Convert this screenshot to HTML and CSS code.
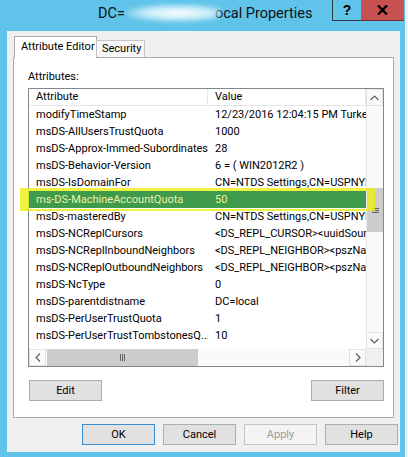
FILE: index.html
```html
<!DOCTYPE html>
<html>
<head>
<meta charset="utf-8">
<link rel="stylesheet" href="styles.css">
</head>
<body>
<div class="window">
  <div class="titlebar">
    <div class="title">DC=<span class="blur"></span>ocal Properties</div>
    <div class="caption-buttons">
      <div class="cap-btn cap-help">?</div>
      <div class="cap-btn cap-close">
        <svg width="11" height="10" viewBox="0 0 11 10"><path d="M1 0.5 L10 9.5 M10 0.5 L1 9.5" stroke="#000" stroke-width="2.4" fill="none"/></svg>
      </div>
    </div>
  </div>
  <div class="client">
    <div class="tabs">
      <div class="tab tab-active">Attribute Editor</div>
      <div class="tab tab-inactive">Security</div>
    </div>
    <div class="panel">
      <div class="label">Attributes:</div>
      <div class="list">
        <div class="rows">
          <div class="row header"><div class="cell">Attribute</div><div class="cell">Value</div></div>
          <div class="row"><div class="cell">modifyTimeStamp</div><div class="cell">12/23/2016 12:04:15 PM Turkey Standard Time</div></div>
          <div class="row"><div class="cell">msDS-AllUsersTrustQuota</div><div class="cell">1000</div></div>
          <div class="row"><div class="cell">msDS-Approx-Immed-Subordinates</div><div class="cell">28</div></div>
          <div class="row"><div class="cell">msDS-Behavior-Version</div><div class="cell">6 = ( WIN2012R2 )</div></div>
          <div class="row"><div class="cell">msDS-IsDomainFor</div><div class="cell">CN=NTDS Settings,CN=USPNYDC</div></div>
          <div class="row selected"><div class="cell">ms-DS-MachineAccountQuota</div><div class="cell">50</div></div>
          <div class="row"><div class="cell">msDs-masteredBy</div><div class="cell">CN=NTDS Settings,CN=USPNYDC</div></div>
          <div class="row"><div class="cell">msDS-NCReplCursors</div><div class="cell">&lt;DS_REPL_CURSOR&gt;&lt;uuidSourceDsa</div></div>
          <div class="row"><div class="cell">msDS-NCReplInboundNeighbors</div><div class="cell">&lt;DS_REPL_NEIGHBOR&gt;&lt;pszNamingContext</div></div>
          <div class="row"><div class="cell">msDS-NCReplOutboundNeighbors</div><div class="cell">&lt;DS_REPL_NEIGHBOR&gt;&lt;pszNamingContext</div></div>
          <div class="row"><div class="cell">msDS-NcType</div><div class="cell">0</div></div>
          <div class="row"><div class="cell">msDS-parentdistname</div><div class="cell">DC=local</div></div>
          <div class="row"><div class="cell">msDS-PerUserTrustQuota</div><div class="cell">1</div></div>
          <div class="row"><div class="cell">msDS-PerUserTrustTombstonesQ...</div><div class="cell">10</div></div>
        </div>
        <div class="vscroll">
          <div class="sb-btn">
            <svg width="9" height="6" viewBox="0 0 9 6"><path d="M0.5 5 L4.5 1 L8.5 5" stroke="#606060" stroke-width="1.2" fill="none"/></svg>
          </div>
          <div class="vtrack">
            <div class="vthumb">
              <svg width="7" height="7" viewBox="0 0 7 7"><path d="M0 1.5 H7 M0 3.5 H7 M0 5.5 H7" stroke="#606060" stroke-width="1" fill="none"/></svg>
            </div>
          </div>
          <div class="sb-btn">
            <svg width="9" height="6" viewBox="0 0 9 6"><path d="M0.5 1 L4.5 5 L8.5 1" stroke="#606060" stroke-width="1.2" fill="none"/></svg>
          </div>
        </div>
        <div class="hscroll">
          <div class="sb-btn">
            <svg width="6" height="9" viewBox="0 0 6 9"><path d="M5 0.5 L1 4.5 L5 8.5" stroke="#606060" stroke-width="1.2" fill="none"/></svg>
          </div>
          <div class="htrack">
            <div class="hthumb">
              <svg width="7" height="7" viewBox="0 0 7 7"><path d="M1.5 0 V7 M3.5 0 V7 M5.5 0 V7" stroke="#606060" stroke-width="1" fill="none"/></svg>
            </div>
          </div>
          <div class="sb-btn">
            <svg width="6" height="9" viewBox="0 0 6 9"><path d="M1 0.5 L5 4.5 L1 8.5" stroke="#606060" stroke-width="1.2" fill="none"/></svg>
          </div>
        </div>
        <div class="corner"></div>
        <div class="marker"></div>
      </div>
      <div class="list-buttons">
        <button class="btn">Edit</button>
        <button class="btn">Filter</button>
      </div>
    </div>
    <div class="dialog-buttons">
      <button class="btn btn-default">OK</button>
      <button class="btn">Cancel</button>
      <button class="btn btn-disabled">Apply</button>
      <button class="btn">Help</button>
    </div>
  </div>
</div>
</body>
</html>
```
FILE: styles.css
```css
* { box-sizing: border-box; }
html, body { margin: 0; padding: 0; }
body {
  width: 408px;
  height: 457px;
  overflow: hidden;
  background: #eef2f4;
  font-family: Roboto, "Liberation Sans", sans-serif;
  font-size: 11px;
  color: #000;
}
.window {
  width: 405px;
  height: 457px;
  background: #5fc3ea;
  display: flex;
  flex-direction: column;
}
.titlebar {
  height: 31px;
  flex: none;
  display: flex;
  align-items: flex-start;
  padding-left: 98px;
}
.title {
  font-size: 14.5px;
  line-height: 28px;
  white-space: nowrap;
  color: #111;
}
.blur {
  display: inline-block;
  width: 96px;
  height: 18px;
  vertical-align: -4px;
  margin-right: -6px;
  position: relative;
  background: radial-gradient(ellipse at 55% 50%, rgba(255,255,255,0.98) 0%, rgba(235,250,255,0.75) 45%, rgba(255,255,255,0) 78%);
  filter: blur(2px);
}
.caption-buttons {
  margin-left: auto;
  display: flex;
  margin-right: 1px;
}
.cap-btn {
  height: 21px;
  display: flex;
  align-items: center;
  justify-content: center;
  border-bottom: 1px solid #2c3b42;
}
.cap-help {
  width: 29px;
  border-left: 1px solid #2c3b42;
  font: bold 14px "Liberation Sans", sans-serif;
}
.cap-close {
  width: 43px;
  background: #c75050;
  border-bottom-color: #7a2e2e;
}
.client {
  flex: 1;
  margin: 0 5px 5px 7px;
  background: #f0f0f0;
  padding-top: 5px;
  display: flex;
  flex-direction: column;
}
.tabs {
  display: flex;
  align-items: flex-end;
  height: 22px;
  padding-left: 7px;
  margin-bottom: -1px;
  position: relative;
  z-index: 1;
}
.tab {
  white-space: nowrap;
  border: 1px solid #acacac;
  border-bottom: none;
}
.tab-active {
  width: 83px;
  height: 22px;
  line-height: 19px;
  padding-left: 6px;
  background: #fff;
}
.tab-inactive {
  width: 49px;
  height: 17px;
  line-height: 16px;
  padding-left: 5px;
  margin-left: -1px;
  margin-bottom: 1px;
  background: #f7f7f7;
  border-color: #c6c6c6;
}
.panel {
  margin-left: 6px;
  width: 381px;
  height: 361px;
  flex: none;
  background: #fff;
  border: 1px solid #acacac;
  padding: 11px 0 0 14px;
}
.label {
  height: 15px;
  line-height: 15px;
  margin-bottom: 4px;
}
.list {
  position: relative;
  width: 356px;
  height: 279px;
  border: 1px solid #828790;
  display: grid;
  grid-template-columns: 1fr 17px;
  grid-template-rows: 1fr 17px;
}
.rows {
  overflow: hidden;
}
.row {
  display: grid;
  grid-template-columns: 179px 1fr;
  height: 17px;
  line-height: 17px;
  white-space: nowrap;
}
.cell {
  padding-left: 7px;
  overflow: hidden;
}
.header {
  border-bottom: 1px solid #e5e5e5;
  line-height: 16px;
}
.header .cell {
  border-right: 1px solid #e5e5e5;
}
.selected {
  background: #3d9b4b;
  color: #f0f0a8;
}
.vscroll {
  display: flex;
  flex-direction: column;
  background: #fafafa;
}
.hscroll {
  display: flex;
  background: #fafafa;
}
.sb-btn {
  flex: none;
  width: 17px;
  height: 17px;
  display: flex;
  align-items: center;
  justify-content: center;
  border: 1px solid #e2e2e2;
  background: #fafafa;
}
.vtrack {
  flex: 1;
  border-left: 1px solid #e8e8e8;
}
.vthumb {
  margin-top: 82px;
  height: 44px;
  background: #cdcdcd;
  display: flex;
  align-items: center;
  justify-content: center;
}
.htrack {
  flex: 1;
}
.hthumb {
  margin-left: 1px;
  width: 151px;
  height: 17px;
  background: #cdcdcd;
  display: flex;
  align-items: center;
  justify-content: center;
}
.corner {
  background: #f0f0f0;
}
.marker {
  position: absolute;
  left: -9px;
  top: 99px;
  width: 355px;
  height: 23px;
  border-style: solid;
  border-color: rgba(238, 238, 25, 0.82);
  border-width: 3px 8px 2px 9px;
  pointer-events: none;
}
.list-buttons {
  display: flex;
  justify-content: space-between;
  width: 356px;
  padding-left: 1px;
  margin-top: 13px;
}
.btn {
  width: 73px;
  height: 21px;
  padding: 0;
  margin: 0;
  background: #e1e1e1;
  border: 1px solid #adadad;
  font: inherit;
  color: #000;
  display: flex;
  align-items: center;
  justify-content: center;
}
.btn-default {
  border-color: #3c8fd1;
}
.btn-disabled {
  background: #f4f4f4;
  border-color: #c4c4c4;
  color: #9a9a9a;
}
.dialog-buttons {
  display: flex;
  justify-content: flex-end;
  gap: 8px;
  margin-top: 6px;
  padding-right: 2px;
}
```
